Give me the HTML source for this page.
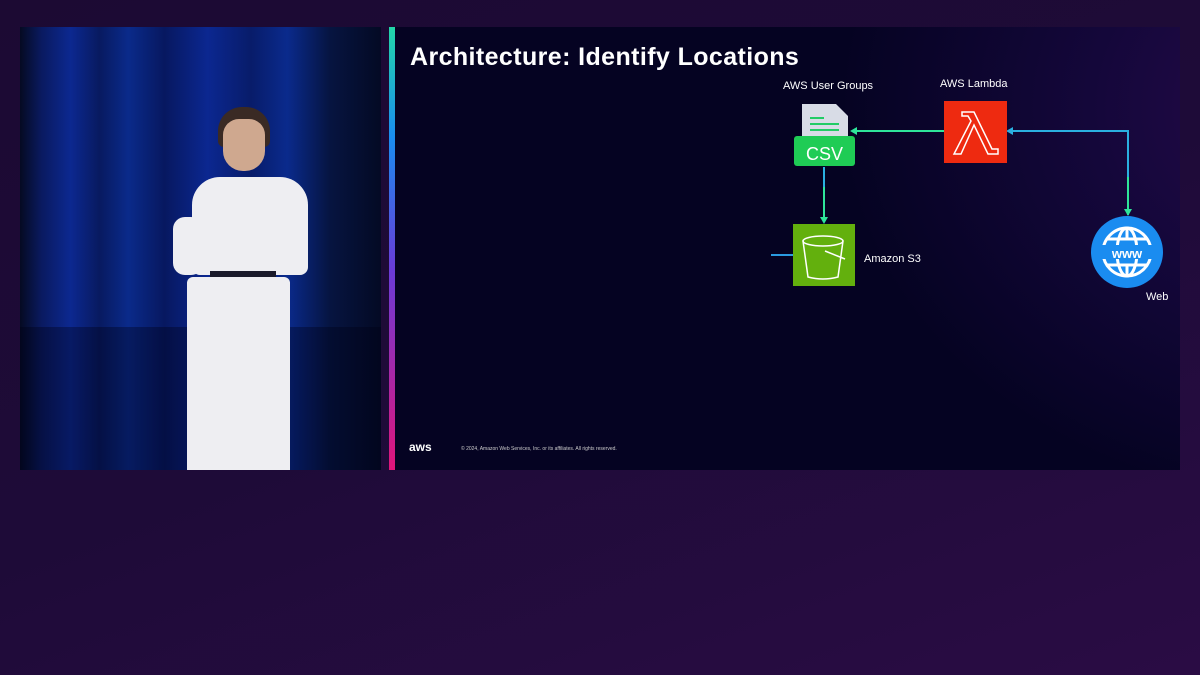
<!DOCTYPE html>
<html><head><style>
body{margin:0;width:1200px;height:675px;overflow:hidden;background:linear-gradient(160deg,#1c0a33 0%,#1e0b38 50%,#2a0c44 100%);font-family:"Liberation Sans",sans-serif;position:relative}
.vid{position:absolute;left:20px;top:27px;width:361px;height:443px;background:linear-gradient(90deg,#050a22 0%,#0a1a60 6%,#0c2890 14%,#081a60 22%,#0a2a8a 30%,#071860 40%,#0b2790 52%,#081c6a 64%,#0a2a8c 74%,#061440 86%,#040a24 100%)}
.slide{position:absolute;left:389px;top:27px;width:791px;height:443px;background:radial-gradient(ellipse 500px 400px at 950px 80px,#2a0a4e 0%,#14073a 50%,rgba(5,3,34,0) 100%),#050322;overflow:hidden}
.bar{position:absolute;left:389px;top:27px;width:6px;height:443px;background:linear-gradient(#22d6a8,#1a8cf0 25%,#6a3bd8 55%,#e0157a 100%)}
.t{position:absolute;color:#fff;font-weight:bold}
.s{position:absolute;color:#fff;font-size:11px}
.w{position:absolute;background:#eeeef2}
</style></head><body>
<div class="vid">
 <div style="position:absolute;left:0;top:300px;width:361px;height:143px;background:rgba(0,0,20,0.35)"></div>
 <div style="position:absolute;left:198px;top:80px;width:52px;height:40px;border-radius:24px 24px 6px 6px;background:#3a2a24"></div>
 <div style="position:absolute;left:203px;top:92px;width:42px;height:52px;border-radius:16px 16px 20px 20px;background:#cfa88f"></div>
 <div class="w" style="left:172px;top:150px;width:116px;height:98px;border-radius:28px 28px 8px 8px"></div>
 <div class="w" style="left:153px;top:190px;width:30px;height:58px;border-radius:12px"></div>
 <div class="w" style="left:256px;top:190px;width:30px;height:50px;border-radius:12px"></div>
 <div style="position:absolute;left:190px;top:244px;width:66px;height:6px;background:#1a1a2a"></div>
 <div class="w" style="left:167px;top:250px;width:103px;height:193px;border-radius:6px 6px 0 0"></div>
</div>
<div class="slide">
 <div class="t" style="left:21px;top:16px;font-size:25px;letter-spacing:0.4px">Architecture: Identify Locations</div>
 <svg style="position:absolute;left:0;top:0" width="791" height="443">
  <g fill="none" stroke-width="2">
   <line x1="555" y1="104" x2="466" y2="104" stroke="#2ee59a"/>
   <path d="M461 104 l7 -4 v8z" fill="#2ee59a" stroke="none"/>
   <path d="M739 188 V104 H623" stroke="#2ab0e0"/>
   <path d="M617 104 l7 -4 v8z" fill="#2ab0e0" stroke="none"/>
   <line x1="739" y1="150" x2="739" y2="182" stroke="#2ee59a"/>
   <path d="M739 189 l-4 -7 h8z" fill="#2ee59a" stroke="none"/>
   <line x1="435" y1="140" x2="435" y2="190" stroke="#2ab0e0"/>
   <line x1="435" y1="160" x2="435" y2="190" stroke="#2ee59a"/>
   <path d="M435 197 l-4 -7 h8z" fill="#2ee59a" stroke="none"/>
   <line x1="382" y1="228" x2="404" y2="228" stroke="#2a9ae0"/>
  </g>
  <path d="M413 77 h34 l12 12 v22 h-46z" fill="#d8dce6"/>
  <g stroke="#22cc66" stroke-width="2"><line x1="421" y1="91" x2="435" y2="91"/><line x1="421" y1="97" x2="450" y2="97"/><line x1="421" y1="103" x2="450" y2="103"/></g>
  <rect x="405" y="109" width="61" height="30" rx="3" fill="#1fcc55"/>
  <text x="435.5" y="133" font-size="18" fill="#fff" text-anchor="middle" font-family="Liberation Sans">CSV</text>
  <rect x="555" y="74" width="63" height="62" fill="#ee2a10"/>
  <path d="M573 85 h12 l18 37 h6 v5 h-10 l-14 -29 l-13 29 h-7 l17 -33 l-3 -5 h-6z" fill="none" stroke="#fff" stroke-width="1.5"/>
  <rect x="404" y="197" width="62" height="62" fill="#63b00d"/>
  <g fill="none" stroke="#fff" stroke-width="1.5"><ellipse cx="434" cy="214" rx="20" ry="5"/><path d="M414 214 l5 36 q15 4 30 0 l5 -36"/><path d="M436 224 l20 8"/></g>
  <circle cx="738" cy="225" r="36" fill="#1a8cf0"/>
  <g fill="none" stroke="#fff" stroke-width="3"><circle cx="738" cy="225" r="24"/><ellipse cx="738" cy="225" rx="10" ry="24"/><line x1="738" y1="201" x2="738" y2="212"/><line x1="738" y1="238" x2="738" y2="249"/><line x1="718" y1="212" x2="758" y2="212"/><line x1="718" y1="238" x2="758" y2="238"/></g>
  <rect x="712" y="218" width="52" height="14" fill="#1a8cf0"/>
  <text x="738" y="231" font-size="13" font-weight="bold" fill="#fff" text-anchor="middle" font-family="Liberation Sans">www</text>
 </svg>
 <div class="s" style="left:394px;top:53px">AWS User Groups</div>
 <div class="s" style="left:551px;top:51px">AWS Lambda</div>
 <div class="s" style="left:475px;top:226px">Amazon S3</div>
 <div class="s" style="left:757px;top:264px">Web</div>
 <div style="position:absolute;left:20px;top:413px;color:#fff;font-size:12px;font-weight:bold">aws</div>
 <div style="position:absolute;left:72px;top:419px;color:#ccc;font-size:5px">© 2024, Amazon Web Services, Inc. or its affiliates. All rights reserved.</div>
</div>
<div class="bar"></div>
</body></html>
